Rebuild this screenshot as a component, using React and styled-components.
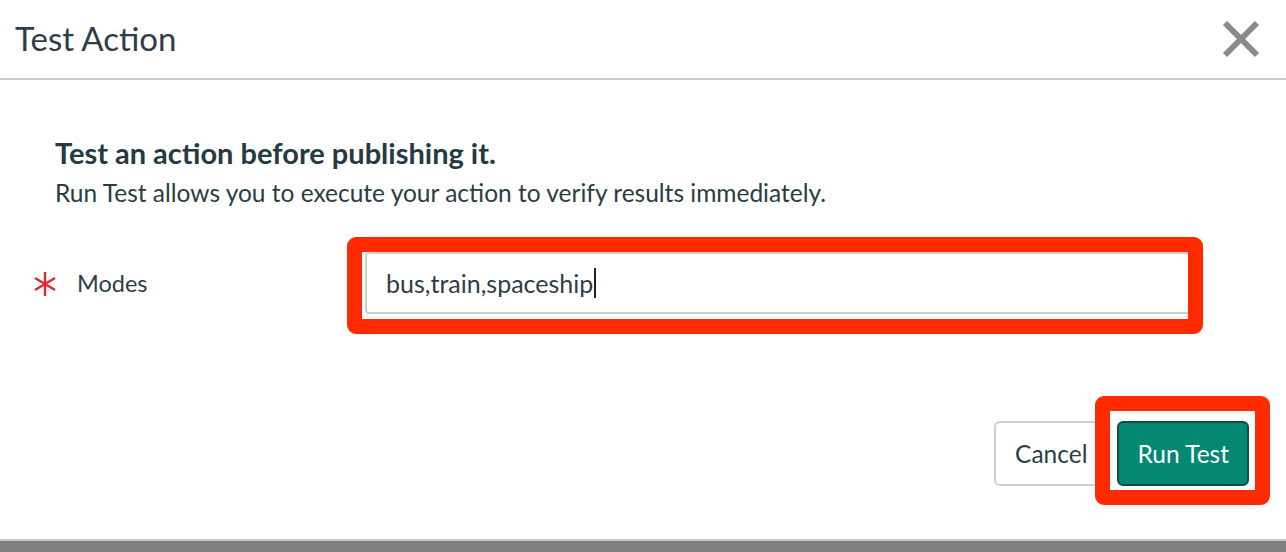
import * as React from 'react';
import styled, { createGlobalStyle } from 'styled-components';

const GlobalStyle = createGlobalStyle`
  html, body {
    margin: 0;
    padding: 0;
    background: #ffffff;
  }
  body {
    font-family: Lato, "Open Sans", sans-serif;
    color: #2e3d49;
  }
`;

const Page = styled.div`
  display: flex;
  flex-direction: column;
  height: 552px;
  width: 1286px;
  overflow: hidden;
`;
const Header = styled.header`
  align-items: center;
  border-bottom: 2px solid #cbcbcb;
  box-sizing: border-box;
  display: flex;
  height: 80px;
  justify-content: space-between;
  padding: 0 26px 0 15px;
`;
const Title = styled.h1`
  color: #2e3d49;
  font-size: 33px;
  font-weight: 400;
  margin: 0 0 2px;
`;
const CloseButton = styled.button`
  background: none;
  border: none;
  cursor: pointer;
  display: flex;
  padding: 0;
`;
const Body = styled.main`
  display: flex;
  flex: 1;
  flex-direction: column;
  padding: 54px 37px 0 55px;
`;
const Heading = styled.h2`
  color: #263a44;
  font-size: 29px;
  font-weight: 700;
  line-height: 38px;
  margin: 0;
`;
const Intro = styled.p`
  color: #293e40;
  font-size: 24.5px;
  line-height: 38px;
  margin: 2px 0 0;
`;
const FieldRow = styled.div`
  align-items: center;
  display: flex;
  margin: 40px 57px 0 -21px;
`;
const Label = styled.label`
  align-items: center;
  display: flex;
  font-size: 23.5px;
  width: 331px;
`;
const Required = styled.span`
  display: flex;
  padding-top: 2px;
  width: 43px;
`;
const InputWrap = styled.div`
  flex: 1;
  position: relative;
`;
const Input = styled.div`
  align-items: center;
  border: 2px solid #cdcdcd;
  border-radius: 4px;
  box-sizing: border-box;
  display: flex;
  font-size: 25px;
  height: 62px;
  padding: 0 19px;
`;
const Caret = styled.span`
  background: #222;
  display: inline-block;
  height: 30px;
  margin-left: 1px;
  width: 2px;
`;
const Highlight = styled.div`
  border: 15px solid #ff2a00;
  border-radius: 9px;
  bottom: ${p => p.$bottom}px;
  left: ${p => p.$left}px;
  pointer-events: none;
  position: absolute;
  right: ${p => p.$right}px;
  top: ${p => p.$top}px;
`;
const Footer = styled.div`
  display: flex;
  gap: 9px;
  justify-content: flex-end;
  margin-top: 107px;
`;
const Button = styled.button`
  background: ${p => (p.$primary ? '#038872' : '#ffffff')};
  border: 2px solid ${p => (p.$primary ? '#0d4f45' : '#cfcfcf')};
  border-radius: 6px;
  color: ${p => (p.$primary ? '#ffffff' : '#2e3d49')};
  font-family: inherit;
  font-size: 24.5px;
  height: 65px;
  padding: 0 ${p => (p.$primary ? 18 : 19)}px;
`;
const ButtonWrap = styled.div`
  position: relative;
`;
const BottomBar = styled.div`
  background: #808080;
  border-top: 2px solid #c8c8c8;
  height: 11px;
  margin-top: auto;
`;

function CloseIcon() {
  return (
    <svg width="38" height="38" viewBox="0 0 38 38">
      <path d="M3 3 L35 35 M35 3 L3 35" stroke="#8a8a8a" strokeWidth="6" />
    </svg>
  );
}

function Asterisk() {
  return (
    <svg width="22" height="26" viewBox="0 0 22 26">
      <path
        d="M11 1 V25 M1 7 L21 19 M21 7 L1 19"
        stroke="#e3282d"
        strokeWidth="2.4"
      />
    </svg>
  );
}

export default function App() {
  return (
    <Page>
      <GlobalStyle />
      <Header>
        <Title>Test Action</Title>
        <CloseButton aria-label="Close">
          <CloseIcon />
        </CloseButton>
      </Header>
      <Body>
        <Heading>Test an action before publishing it.</Heading>
        <Intro>Run Test allows you to execute your action to verify results immediately.</Intro>
        <FieldRow>
          <Label>
            <Required>
              <Asterisk />
            </Required>
            Modes
          </Label>
          <InputWrap>
            <Input>
              bus,train,spaceship
              <Caret />
            </Input>
            <Highlight $top={-15} $left={-18} $right={-11} $bottom={-20} />
          </InputWrap>
        </FieldRow>
        <Footer>
          <Button>Cancel</Button>
          <ButtonWrap>
            <Button $primary>Run Test</Button>
            <Highlight $top={-25} $left={-22} $right={-21} $bottom={-19} />
          </ButtonWrap>
        </Footer>
      </Body>
      <BottomBar />
    </Page>
  );
}
